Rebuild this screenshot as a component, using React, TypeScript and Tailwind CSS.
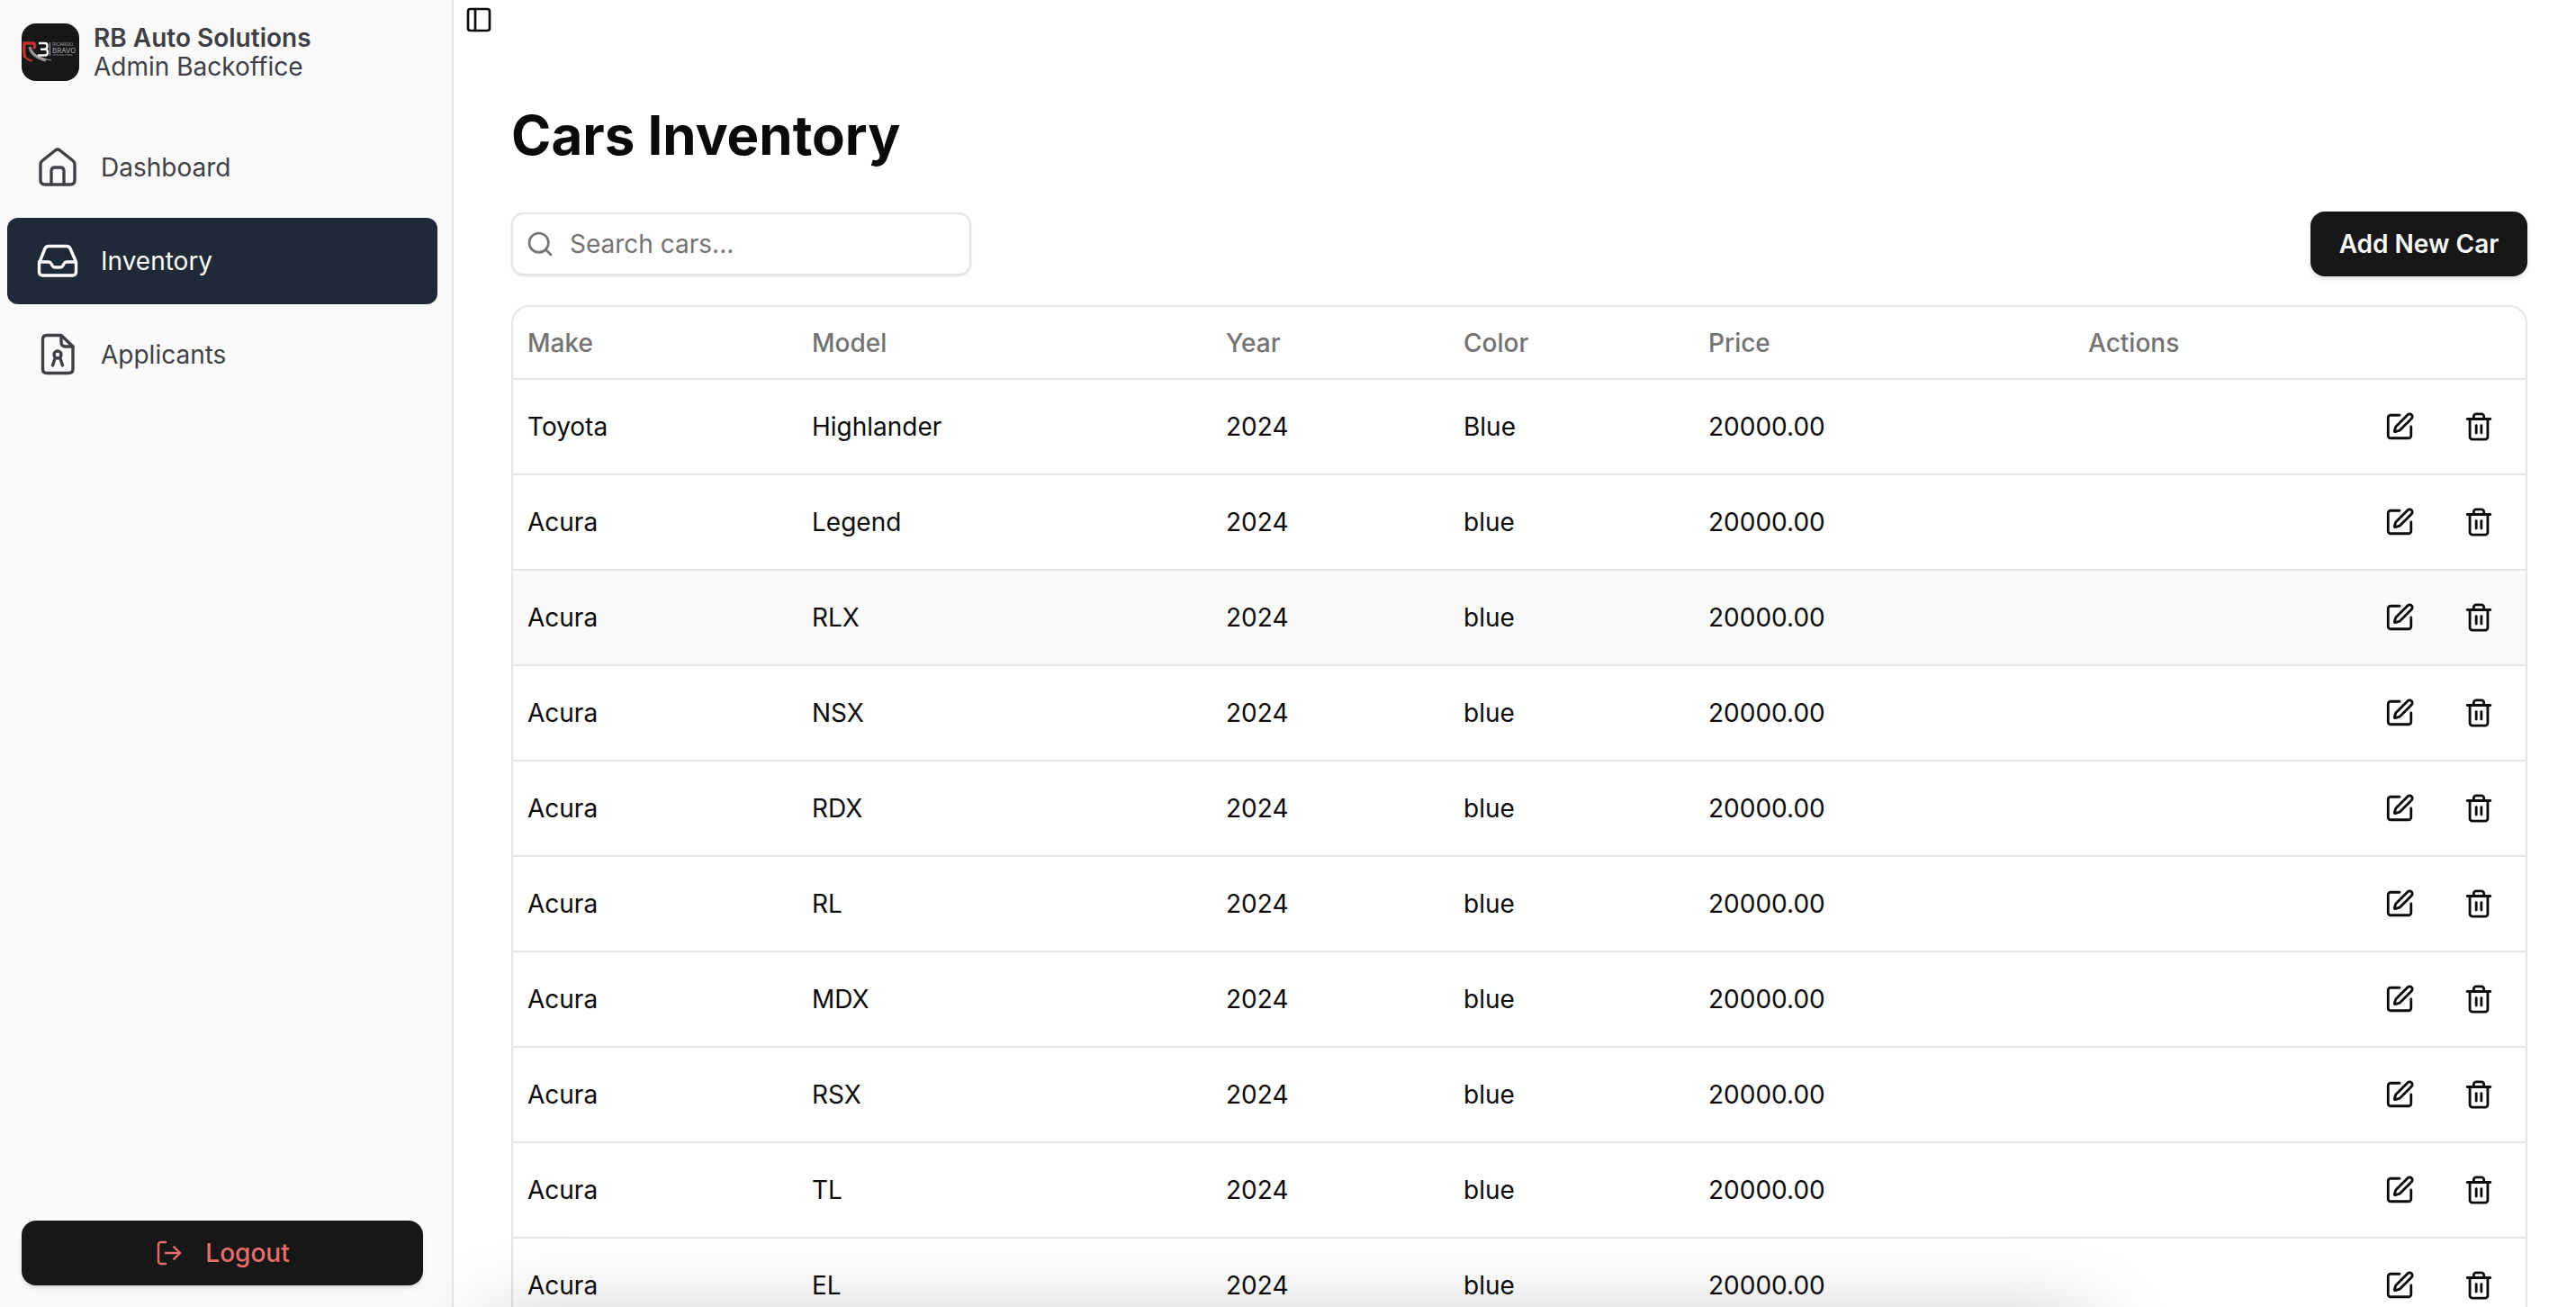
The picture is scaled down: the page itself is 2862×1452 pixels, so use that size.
import { LogOut, PanelLeft, Search, SquarePen, Trash2 } from "lucide-react";

const rows: [string, string, string][] = [
  ["Toyota", "Highlander", "Blue"],
  ["Acura", "Legend", "blue"],
  ["Acura", "RLX", "blue"],
  ["Acura", "NSX", "blue"],
  ["Acura", "RDX", "blue"],
  ["Acura", "RL", "blue"],
  ["Acura", "MDX", "blue"],
  ["Acura", "RSX", "blue"],
  ["Acura", "TL", "blue"],
  ["Acura", "EL", "blue"],
];

function Logo() {
  return (
    <div className="w-16 h-16 rounded-2xl bg-[#171717] shrink-0 overflow-hidden">
      <svg width="64" height="64" viewBox="0 0 64 64" fill="none">
        <path d="M3.5 38 C2.5 32 2.5 27 3 22 H12.5 C15 22 15.5 26 13 28" stroke="#c0332d" strokeWidth="3.4" />
        <path d="M3.5 36 C5 39 8 41 12 41.5" stroke="#c0332d" strokeWidth="2.2" />
        <path d="M9 26 C10 32 15 38 27 41" stroke="#8a8a8a" strokeWidth="3.5" />
        <path d="M11 30 C14 35 20 39 33 41" stroke="#d4d4d4" strokeWidth="0.7" />
        <path d="M19 22 H26 C29.5 22 29.5 28 26 28.5 C30 29 30 35.5 26 35.5 H18 M21 28.7 H26" stroke="#f5f5f5" strokeWidth="2.4" />
        <path d="M31.5 21 V36" stroke="#e5e5e5" strokeWidth="0.7" />
        <text x="34" y="25" fontSize="5.3" fill="#c8c8c8" fontFamily="Inter, sans-serif" fontWeight="300">RICARDO</text>
        <text x="34" y="32.6" fontSize="8" fill="#d0d0d0" fontFamily="Inter, sans-serif" fontWeight="300">BRAVO</text>
        <text x="35" y="36.4" fontSize="2.4" fill="#bdbdbd" fontFamily="Inter, sans-serif">AUTO SOLUTIONS</text>
      </svg>
    </div>
  );
}

function HomeIcon() {
  return (
    <svg width="70" height="70" viewBox="0 0 70 70" fill="none" stroke="#3f3f46" strokeWidth="3.4" strokeLinejoin="round" strokeLinecap="round" className="shrink-0">
      <path d="M31.5 16 Q34 14 36.5 16 L51 27.5 Q53 29 53 32 V49 Q53 54 48 54 H20 Q15 54 15 49 V32 Q15 29 17 27.5 Z" />
      <path d="M27 54 V39 Q27 35 31 35 H37 Q41 35 41 39 V54" />
    </svg>
  );
}

function InboxIcon() {
  return (
    <svg width="70" height="70" viewBox="0 0 70 70" fill="none" stroke="#ffffff" strokeWidth="3.4" strokeLinejoin="round" strokeLinecap="round" className="shrink-0">
      <path d="M14 36 L20 21 Q21.5 18.5 24 18.5 H44 Q46.5 18.5 48 21 L54.5 36 V47 Q54.5 51 50.5 51 H17.5 Q13.5 51 13.5 47 V36 Z" />
      <path d="M14 36 H24 Q26 36 27 38 L28 40 Q29 42 31 42 H37 Q39 42 40 40 L41 38 Q42 36 44 36 H54.5" />
    </svg>
  );
}

function ApplicantIcon() {
  return (
    <svg width="70" height="70" viewBox="0 0 70 70" fill="none" stroke="#3f3f46" strokeWidth="3.4" strokeLinejoin="round" strokeLinecap="round" className="shrink-0">
      <path d="M22 13.5 H38 L51 26 V51 Q51 55.5 46 55.5 H22 Q17.5 55.5 17.5 51 V18 Q17.5 13.5 22 13.5 Z" />
      <path d="M38 14 V21 Q38 26 43 26 H51" />
      <circle cx="34" cy="35" r="4" />
      <path d="M28.5 47 L31 39.5 M39.5 47 L37 39.5" />
    </svg>
  );
}

export default function App() {
  return (
    <div className="relative flex w-[2862px] h-[1452px] overflow-hidden bg-white font-['Inter',sans-serif] text-[28px] leading-[40px] text-[#0a0a0a]">
      <aside className="w-[504px] shrink-0 h-full bg-[#fafafa] border-r-2 border-[#e5e5e5] flex flex-col">
        <div className="flex items-center gap-4 pl-6 pt-[26px]">
          <Logo />
          <div className="text-[#3f3f46] leading-[32px]">
            <div className="font-semibold">RB Auto Solutions</div>
            <div>Admin Backoffice</div>
          </div>
        </div>
        <nav className="flex flex-col gap-2 px-2 mt-[48px] w-[494px]">
          <div className="h-24 flex items-center pl-[22px] gap-3 rounded-xl text-[#3f3f46]">
            <HomeIcon />
            <span>Dashboard</span>
          </div>
          <div className="h-24 flex items-center pl-[22px] gap-3 rounded-xl bg-[#1f2937] text-white">
            <InboxIcon />
            <span>Inventory</span>
          </div>
          <div className="h-24 flex items-center pl-[22px] gap-3 rounded-xl text-[#3f3f46]">
            <ApplicantIcon />
            <span>Applicants</span>
          </div>
        </nav>
        <div className="mt-auto px-6 pb-6">
          <button className="w-[446px] h-[72px] rounded-2xl bg-[#171717] shadow-md flex items-center justify-center gap-[24px] text-[#e56f68] font-medium">
            <LogOut size={32} strokeWidth={1.8} />
            <span>Logout</span>
          </button>
        </div>
      </aside>
      <main className="flex-1 min-w-0 flex flex-col">
        <div className="h-[44px] pl-[12px] flex items-center shrink-0">
          <PanelLeft size={32} strokeWidth={2} />
        </div>
        <div className="pl-[64px] pr-[54px] pt-[70px] flex flex-col">
          <h1 className="text-[60px] leading-[72px] font-bold">Cars Inventory</h1>
          <div className="flex items-center justify-between mt-[49px]">
            <div className="w-[511px] h-[70px] rounded-[14px] border-2 border-[#e5e5e5] bg-white shadow-sm flex items-center pl-[14px] gap-[17px] text-[#737373]">
              <Search size={32} strokeWidth={2} />
              <span>Search cars...</span>
            </div>
            <button className="w-[241px] h-[72px] rounded-2xl bg-[#171717] text-[#fafafa] font-semibold shadow-md">Add New Car</button>
          </div>
          <div className="mt-8 rounded-[20px] border-2 border-[#e5e5e5] overflow-hidden">
            <table className="w-full table-fixed border-collapse text-left">
              <thead>
                <tr className="h-[80px] border-b-2 border-[#e5e5e5] text-[#737373]">
                  <th className="w-[316px] pl-4 font-medium">Make</th>
                  <th className="w-[460px] pl-4 font-medium">Model</th>
                  <th className="w-[264px] pl-4 font-medium">Year</th>
                  <th className="w-[272px] pl-4 font-medium">Color</th>
                  <th className="w-[422px] pl-4 font-medium">Price</th>
                  <th className="pl-4 font-medium">Actions</th>
                </tr>
              </thead>
              <tbody>
                {rows.map(([make, model, color], i) => (
                  <tr key={model} className={i === 2 ? "h-[106px] border-b-2 border-[#e5e5e5] bg-[#fafafa]" : "h-[106px] border-b-2 border-[#e5e5e5]"}>
                    <td className="pl-4">{make}</td>
                    <td className="pl-4">{model}</td>
                    <td className="pl-4">2024</td>
                    <td className="pl-4">{color}</td>
                    <td className="pl-4">20000.00</td>
                    <td className="pr-4">
                      <div className="flex justify-end gap-4">
                        <span className="w-[72px] h-[72px] flex items-center justify-center"><SquarePen size={34} strokeWidth={2} /></span>
                        <span className="w-[72px] h-[72px] flex items-center justify-center"><Trash2 size={34} strokeWidth={2} /></span>
                      </div>
                    </td>
                  </tr>
                ))}
              </tbody>
            </table>
          </div>
        </div>
      </main>
      <div className="absolute left-[540px] top-[1480px] w-[1780px] h-24 shadow-[0_0_100px_rgba(0,0,0,0.32)]" />
    </div>
  );
}
